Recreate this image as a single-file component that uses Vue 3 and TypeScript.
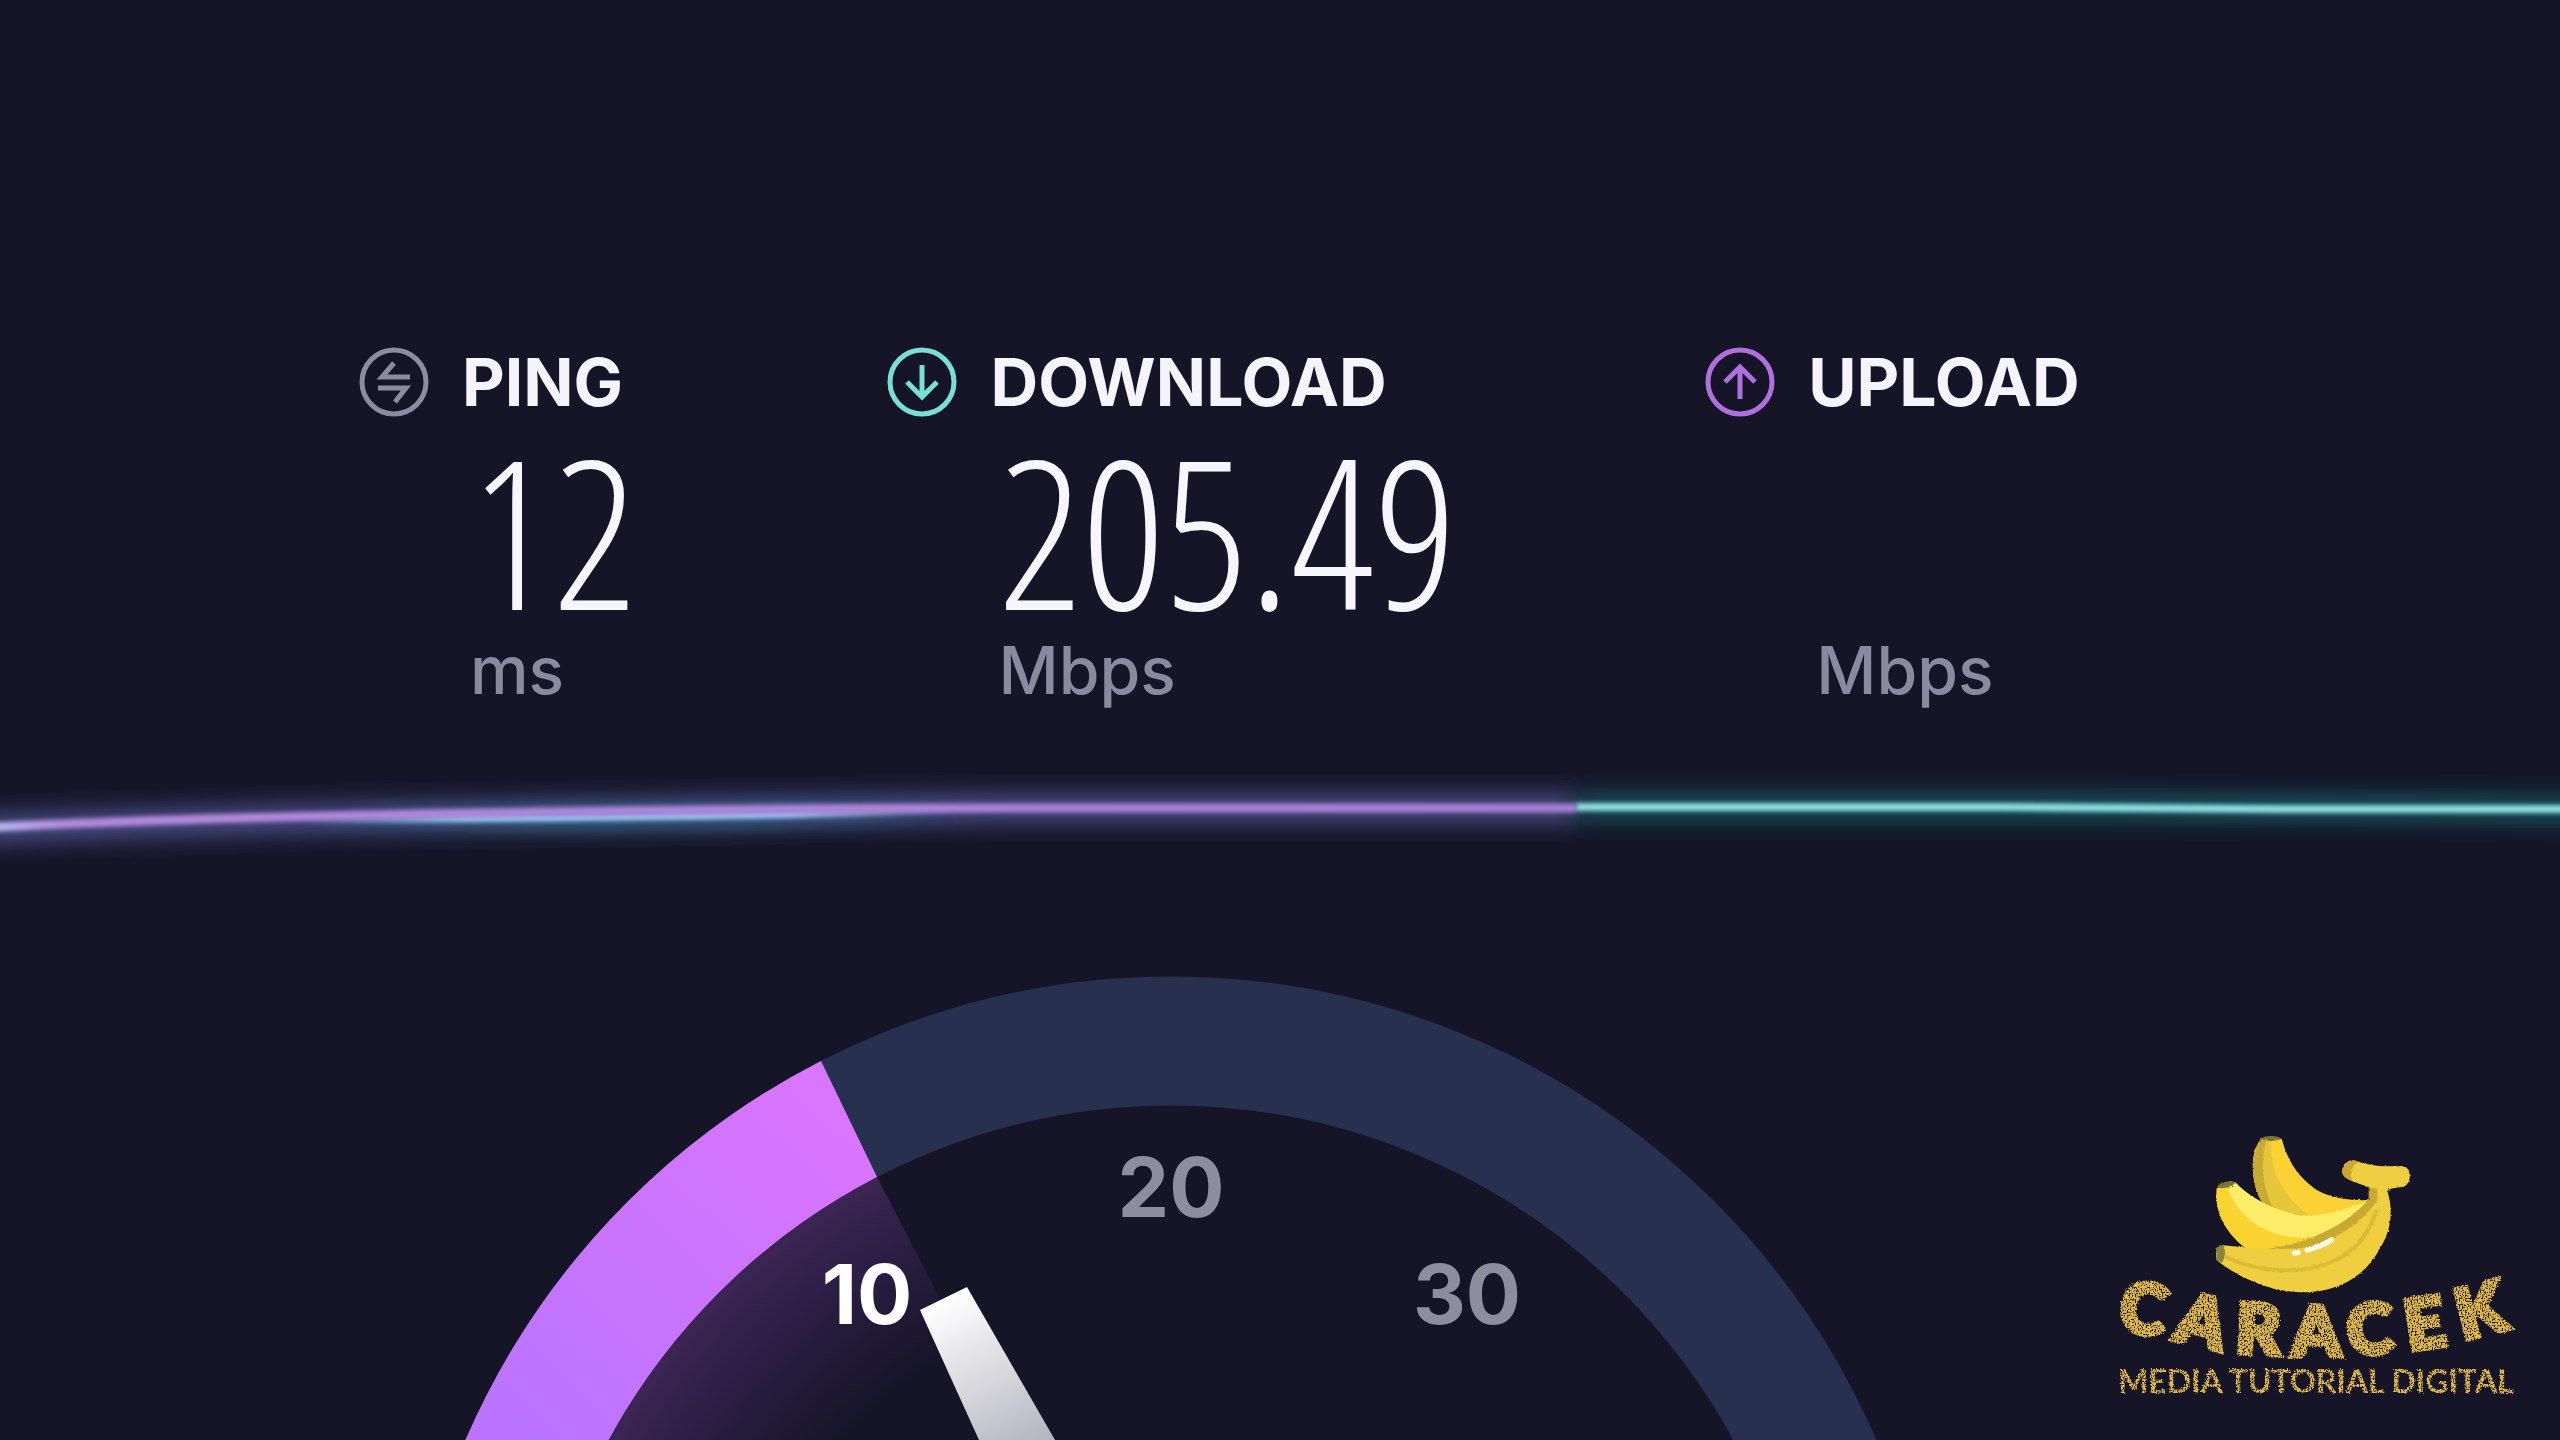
<script setup lang="ts">
interface Metric {
  id: string
  title: string
  value: string
  unit: string
  icon: string
}

const metrics: Metric[] = [
  { id: 'ping', title: 'PING', value: '12', unit: 'ms', icon: 'M36 17 24 31H52M20 42H48L37 56' },
  { id: 'download', title: 'DOWNLOAD', value: '205.49', unit: 'Mbps', icon: 'M36 19V51M21 36 36 51 51 36' },
  { id: 'upload', title: 'UPLOAD', value: '', unit: 'Mbps', icon: 'M36 53V21M21 36 36 21 51 36' },
]
</script>

<template>
  <main class="page">
    <section class="metrics" aria-label="Results">
      <article v-for="m in metrics" :key="m.id" class="metric" :class="m.id">
        <svg class="icon" viewBox="0 0 72 72" aria-hidden="true">
          <circle cx="36" cy="36" r="32" />
          <path :d="m.icon" />
        </svg>
        <h2 class="title">{{ m.title }}</h2>
        <p class="value">{{ m.value }}</p>
        <p class="unit">{{ m.unit }}</p>
      </article>
    </section>

    <svg class="wave" viewBox="0 740 2560 160" aria-hidden="true">
      <defs>
        <filter id="glow" filterUnits="userSpaceOnUse" x="-60" y="740" width="2680" height="160">
          <feGaussianBlur stdDeviation="11" />
        </filter>
        <filter id="soft" filterUnits="userSpaceOnUse" x="-60" y="740" width="2680" height="160">
          <feGaussianBlur stdDeviation="2" />
        </filter>
        <linearGradient id="blue" gradientUnits="userSpaceOnUse" x1="300" y1="0" x2="960" y2="0">
          <stop offset="0" stop-color="#8fc8f0" stop-opacity="0" />
          <stop offset="0.25" stop-color="#8fc8f0" />
          <stop offset="0.75" stop-color="#9cc0f4" />
          <stop offset="1" stop-color="#9cc0f4" stop-opacity="0" />
        </linearGradient>
        <linearGradient id="tealglow" gradientUnits="userSpaceOnUse" x1="300" y1="0" x2="960" y2="0">
          <stop offset="0" stop-color="#21788a" stop-opacity="0" />
          <stop offset="0.4" stop-color="#21788a" />
          <stop offset="0.7" stop-color="#21788a" />
          <stop offset="1" stop-color="#21788a" stop-opacity="0" />
        </linearGradient>
        <linearGradient id="violet" gradientUnits="userSpaceOnUse" x1="0" y1="0" x2="1576" y2="0">
          <stop offset="0" stop-color="#b3b4ea" />
          <stop offset="0.04" stop-color="#b389dc" />
          <stop offset="1" stop-color="#a57fd4" />
        </linearGradient>
      </defs>
      <g fill="none">
        <path d="M-20 829C300 815 700 812 1000 808H1576" stroke="#4a4e86" stroke-width="28" filter="url(#glow)" />
        <path d="M1576 807H2100L2600 809" stroke="#16585f" stroke-width="24" filter="url(#glow)" />
        <path d="M300 823C560 820 760 818 960 812" stroke="url(#tealglow)" stroke-width="10" filter="url(#glow)" />
        <path d="M300 820C560 817 760 817 960 809" stroke="url(#blue)" stroke-width="8" filter="url(#soft)" />
        <path d="M-20 828C100 821 240 817 480 813C700 810 800 808 1000 808H1576" stroke="url(#violet)" stroke-width="9" filter="url(#soft)" />
        <path d="M1576 807H2000L2280 809H2600" stroke="#8fdde0" stroke-width="8" filter="url(#soft)" />
      </g>
    </svg>

    <svg class="gauge" viewBox="0 900 2560 540" role="img" aria-label="Speed gauge">
      <defs>
        <linearGradient id="arc" gradientUnits="userSpaceOnUse" x1="840" y1="1100" x2="520" y2="1440">
          <stop offset="0" stop-color="#da75ff" />
          <stop offset="1" stop-color="#ba74ff" />
        </linearGradient>
        <radialGradient id="haze" gradientUnits="userSpaceOnUse" cx="1171" cy="1745" r="640">
          <stop offset="0.7" stop-color="#54307c" stop-opacity="0" />
          <stop offset="0.84" stop-color="#54307c" stop-opacity="0.25" />
          <stop offset="1" stop-color="#563070" stop-opacity="0.6" />
        </radialGradient>
        <linearGradient id="needle" gradientUnits="userSpaceOnUse" x1="944" y1="1300" x2="1020" y2="1450">
          <stop offset="0" stop-color="#ffffff" />
          <stop offset="1" stop-color="#b6b6c0" />
        </linearGradient>
      </defs>
      <circle cx="1171" cy="1745" r="704" fill="none" stroke="#27314f" stroke-width="129" />
      <path d="M1171 1745 877 1177A640 640 0 0 0 531 1745Z" fill="url(#haze)" />
      <path d="M821 1061A769 769 0 0 0 402 1745H531A640 640 0 0 1 877 1177Z" fill="url(#arc)" />
      <path d="M920 1310 967 1287 1055 1440 1171 1745 979 1440Z" fill="url(#needle)" />
      <g class="scale">
        <text class="reached" x="867" y="1324">10</text>
        <text x="1171" y="1217">20</text>
        <text x="1467" y="1324">30</text>
      </g>
    </svg>

    <svg class="logo" viewBox="0 0 1320 930" role="img" aria-label="Caracek Media Tutorial Digital">
      <defs>
        <filter id="grain" x="-5%" y="-5%" width="110%" height="110%">
          <feTurbulence type="fractalNoise" baseFrequency="0.22" numOctaves="2" seed="4" result="noise" />
          <feColorMatrix in="noise" type="matrix" values="0 0 0 0 0  0 0 0 0 0  0 0 0 0 0  6 0 0 0 -2" result="mask" />
          <feDisplacementMap in="SourceGraphic" in2="noise" scale="12" result="rough" />
          <feComposite in="rough" in2="mask" operator="in" />
        </filter>
        <filter id="edge" x="-5%" y="-5%" width="110%" height="110%">
          <feTurbulence type="fractalNoise" baseFrequency="0.15" numOctaves="2" seed="2" result="noise" />
          <feDisplacementMap in="SourceGraphic" in2="noise" scale="8" />
        </filter>
      </defs>
      <g filter="url(#edge)">
        <path d="M484 86 545 86C562 150 592 200 650 240C700 268 760 272 810 270L780 310 640 335 500 290C450 230 445 130 484 86Z" fill="#fbd135" />
        <path d="M512 88C510 160 530 250 640 325L560 320 495 290C450 230 450 130 484 86Z" fill="#e6c63c" />
        <path d="M484 86H500C482 150 485 230 520 295L490 280C450 230 450 130 484 86Z" fill="#c9aa30" />
        <path d="M482 88C490 76 535 74 545 88L512 94Z" fill="#7d7633" />
        <path d="M350 235 405 217C450 265 520 300 600 317C680 322 750 290 808 272L720 380 560 430 435 413C380 370 342 310 350 235Z" fill="#fbd432" />
        <path d="M380 230 405 217C450 265 520 300 600 317C680 322 750 290 808 272L720 365C680 385 640 385 590 382C480 375 410 310 380 230Z" fill="#ffec68" />
        <path d="M354 228C365 213 395 211 406 218L392 232 362 235Z" fill="#7d7633" />
        <path d="M370 406C420 410 480 420 560 414C680 395 770 350 810 290L808 232 760 215C735 205 722 195 728 175C735 150 755 148 775 155C820 170 870 170 910 168C935 175 935 215 915 228C895 235 875 232 862 242C880 300 875 360 840 415C790 510 700 548 600 547C510 545 410 500 350 450C345 425 350 410 370 406Z" fill="#efcf40" />
        <path d="M500 417C640 400 760 330 806 265V234H832V270C780 350 690 400 590 416Z" fill="#c8a930" />
        <path d="M760 215C735 205 722 195 728 175C735 150 755 148 775 155C750 170 748 200 760 215Z" fill="#c8a930" />
        <path d="M375 440C480 490 590 490 670 465C750 440 800 390 830 300" fill="none" stroke="#dcbb38" stroke-width="12" />
        <path d="M370 406 350 412V450L366 458C376 440 378 422 370 406Z" fill="#8b8238" />
        <path d="M583 430 594 427M622 420C650 412 675 402 694 390" fill="none" stroke="#fffdf0" stroke-width="16" stroke-linecap="round" />
      </g>
      <g filter="url(#grain)">
        <text class="brand" x="52 218 404 576 746 926 1088" y="660 688 728 738 736 722 690" rotate="8 14 3 0 -4 -9 -14">CARACEK</text>
        <text class="tagline" x="648" y="848">MEDIA TUTORIAL DIGITAL</text>
      </g>
    </svg>
  </main>
</template>

<style>
body {
  margin: 0;
  background: #161527;
}
</style>

<style scoped>
.page {
  position: relative;
  min-height: 100vh;
  overflow: hidden;
  background: #161527;
  font-family: Inter, "Liberation Sans", sans-serif;
}
.metrics {
  display: grid;
  grid-template-columns: 528fr 817fr 855fr;
  height: 394px;
  padding: 346px 0 0 358px;
}
.metric {
  display: grid;
  grid-template-columns: 72px 1fr;
  grid-template-rows: 72px 208px 88px;
  column-gap: 32px;
  align-content: start;
  color: #8d8ba0;
}
.download {
  color: #79dfd5;
}
.upload {
  color: #ae70dc;
}
.icon {
  width: 72px;
  height: 72px;
  fill: none;
  stroke: currentColor;
  stroke-width: 5;
}
.title,
.value,
.unit {
  margin: 0;
  white-space: nowrap;
}
.title {
  font-size: 66px;
  font-weight: 700;
  line-height: 72px;
  color: #f4f4fa;
}
.value {
  grid-column: 2;
  padding: 32px 0 0 8px;
  font-family: "Open Sans Condensed Light", "Roboto Condensed", Roboto, sans-serif;
  font-size: 208px;
  font-weight: 300;
  line-height: 160px;
  color: #f6f6fc;
}
.unit {
  grid-column: 2;
  padding-left: 8px;
  font-size: 66px;
  font-weight: 500;
  line-height: 88px;
  color: #8b899e;
}
.wave,
.gauge {
  display: block;
  width: 100%;
}
.scale {
  font-size: 82px;
  font-weight: 700;
  text-anchor: middle;
  fill: #8e8d9b;
}
.reached {
  fill: #ffffff;
}
.logo {
  position: absolute;
  right: 20px;
  bottom: 20px;
  width: 440px;
  height: 310px;
}
.brand,
.tagline {
  font-family: Lato, sans-serif;
  fill: #e3bb48;
}
.brand {
  font-size: 208px;
  font-weight: 900;
  stroke: #e3bb48;
  stroke-width: 16;
}
.tagline {
  font-size: 96px;
  font-weight: 700;
  text-anchor: middle;
}
</style>
